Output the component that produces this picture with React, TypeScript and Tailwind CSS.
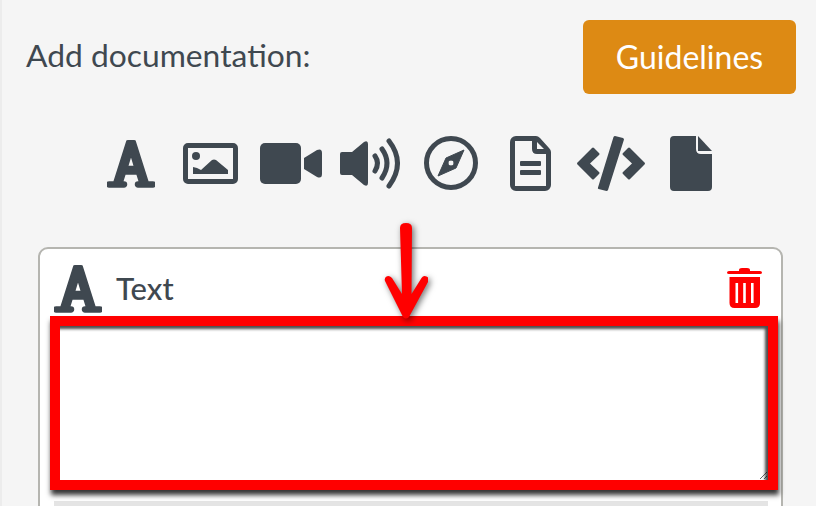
const slate = "#3f4850";

function LetterIcon({ className }: { className: string }) {
  return (
    <svg viewBox="0 0 48 48" className={className} fill={slate}>
      <path
        fillRule="evenodd"
        stroke={slate}
        strokeWidth="1.5"
        strokeLinejoin="round"
        d="M20 1q4-1.500 8 0l13 41h5a2.500 2.500 0 0 1 0 5H31a2.500 2.500 0 0 1 0-5h1.500L30 34H18l-2.500 8H17a2.500 2.500 0 0 1 0 5H2a2.500 2.500 0 0 1 0-5h5zM24 15l-3.500 11.500h7z"
      />
    </svg>
  );
}

function Toolbar() {
  return (
    <div className="flex items-center h-[56px] mt-[41px] pl-[105px]">
      <LetterIcon className="w-[48px] h-[48px] mt-[2px]" />
      <svg viewBox="0 0 55 41" className="w-[55px] h-[41px] ml-[28px]" fill={slate}>
        <path
          fillRule="evenodd"
          d="M5 0h45a5 5 0 0 1 5 5v31a5 5 0 0 1-5 5H5a5 5 0 0 1-5-5V5a5 5 0 0 1 5-5zM5 5v31h45V5z"
        />
        <circle cx="13" cy="13" r="4" />
        <path d="M10 31v-7l4 1 4 2 11-10q2-1 4 0l12 10v4z" />
      </svg>
      <svg viewBox="0 0 62 41" className="w-[62px] h-[41px] ml-[22px]" fill={slate}>
        <rect width="41" height="41" rx="5" />
        <path d="M44 15l13-8q5-2 5 3v21q0 5-5 3l-13-8z" />
      </svg>
      <svg viewBox="0 0 62 51" className="w-[62px] h-[51px] ml-[18px]" fill={slate}>
        <path d="M2 14h10L24 4q4-2 4 2v39q0 4-4 2L12 37H2q-2 0-2-2V16q0-2 2-2z" />
        <g fill="none" stroke={slate} strokeWidth="5" strokeLinecap="round">
          <path d="M35 18q5 7 0 15" />
          <path d="M42 11q10 14 0 29" />
          <path d="M49 3q17 22 0 45" />
        </g>
      </svg>
      <svg viewBox="0 0 54 54" className="w-[54px] h-[54px] ml-[22px]" fill={slate}>
        <circle cx="27" cy="27" r="24.5" fill="none" stroke={slate} strokeWidth="5" />
        <path
          fillRule="evenodd"
          d="M40 14L32 32 14 40l8-18zM27 24a3 3 0 1 0 .01 0z"
          stroke={slate}
          strokeLinejoin="round"
        />
      </svg>
      <svg viewBox="0 0 41 55" className="w-[41px] h-[55px] ml-[32px]" fill={slate}>
        <path
          fillRule="evenodd"
          d="M6 0h20q2 0 4 2l9 10q2 2 2 4v33a6 6 0 0 1-6 6H6a6 6 0 0 1-6-6V6a6 6 0 0 1 6-6zM5 5v45h31V18H27q-5 0-5-5V5zM27 6v7h7z"
        />
        <rect x="10" y="25" width="21" height="5" rx="1" />
        <rect x="10" y="34" width="21" height="5" rx="1" />
      </svg>
      <svg viewBox="0 0 68 55" className="w-[68px] h-[55px] ml-[26px]" fill={slate}>
        <path d="M17 12l5 5q1 1 0 2l-9 8.500 9 8.500q1 1 0 2l-5 5q-1 1-2 0L1 29q-2-1.500 0-3l14-14q1-1 2 0z" />
        <path d="M51 12l-5 5q-1 1 0 2l9 8.500-9 8.500q-1 1 0 2l5 5q1 1 2 0l14-14q2-1.500 0-3L53 12q-1-1-2 0z" />
        <path d="M38 0l8 2q1 .5 1 1.500L31 54q-.5 1-1.500 1l-8-2q-1-.5-.5-1.500L36.500 1q.5-1 1.500-1z" />
      </svg>
      <svg viewBox="0 0 42 55" className="w-[42px] h-[55px] ml-[25px]" fill={slate}>
        <path d="M4 0h22v13q0 5 5 5h11v33a4 4 0 0 1-4 4H4a4 4 0 0 1-4-4V4a4 4 0 0 1 4-4z" />
        <path d="M28 0l14 15H28z" />
      </svg>
    </div>
  );
}

function Annotation() {
  return (
    <>
      <div className="absolute left-[10px] top-[67px] w-[728px] h-[174px] border-[10px] border-[#ff0000] shadow-[1px_5px_5px_rgba(0,0,0,0.8),inset_-3px_3px_3px_rgba(0,0,0,0.7)] pointer-events-none" />
      <svg viewBox="0 0 44 100" className="absolute left-[344px] top-[-27px] w-[44px] h-[100px] drop-shadow-[2px_2px_3px_rgba(0,0,0,0.55)]">
        <path
          d="M16 6q0-5 6-5t6 5l-.5 66 10-16q2-3 5-1.500t2 4.500L25 95q-3 3-6 0L1 59q-1-3 1.500-4.500T8 56l10 16z"
          fill="#ff0000"
        />
      </svg>
    </>
  );
}

export default function App() {
  return (
    <div
      className="w-[816px] h-[506px] overflow-hidden bg-[#f5f5f5] border-l-2 border-[#ececec] text-[#3f4850]"
      style={{ fontFamily: '"Lato", "Open Sans", sans-serif' }}
    >
      <div className="flex justify-between items-start pl-[24px] pr-[20px] pt-[20px]">
        <p className="text-[31.8px] leading-[34px] mt-[18px]">Add documentation:</p>
        <button className="w-[213px] h-[74px] rounded-[6px] bg-[#dd8a14] text-white text-[32px]">
          Guidelines
        </button>
      </div>
      <Toolbar />
      <div className="relative ml-[36px] mt-[56px] w-[745px] h-[300px] bg-white border-2 border-[#b5b5b0] rounded-[10px] px-[14px]">
        <div className="flex items-center h-[67px] pt-[2px]">
          <LetterIcon className="w-[48px] h-[48px] mt-[11px]" />
          <span className="ml-[14px] mt-[9px] text-[31px] font-medium">Text</span>
          <svg viewBox="0 0 35 40" className="w-[35px] h-[40px] ml-auto mt-[9px] mr-[5px]" fill="#ff0000">
            <path d="M12 2q0-2 3-2h5q3 0 3 2v1h10q2 0 2 1.500T33 6H2q-2 0-2-1.500T2 3h10z" />
            <path
              fillRule="evenodd"
              d="M2.500 9h30.500v26q0 5-5 5H7.500q-5 0-5-5zM8.500 15v20h2.600V15zM16.200 15v20h2.600V15zM24 15v20h2.600V15z"
            />
          </svg>
        </div>
        <textarea className="block w-[708px] h-[154px] ml-[6px] mt-[10px] bg-white outline-none" />
        <div className="h-[20px] w-[714px] bg-[#e4e4e4] mt-[21px]" />
        <Annotation />
      </div>
    </div>
  );
}
